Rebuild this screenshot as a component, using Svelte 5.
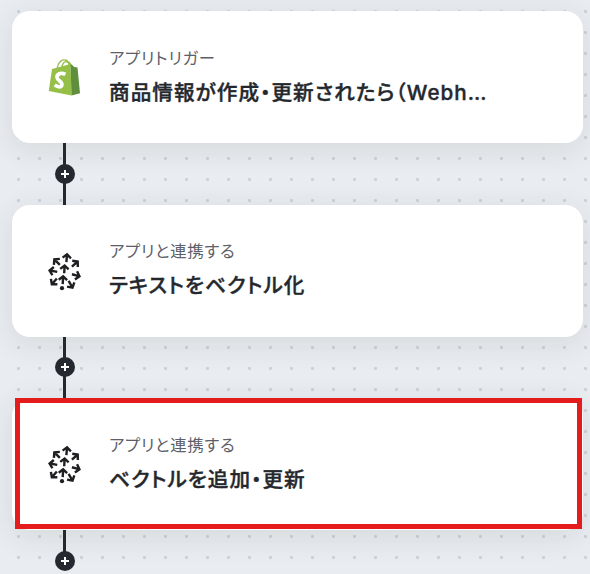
<script>
  let steps = [
    { icon: "shop", label: "アプリトリガー", title: "商品情報が作成・更新されたら（Webh…", selected: false },
    { icon: "vector", label: "アプリと連携する", title: "テキストをベクトル化", selected: false },
    { icon: "vector", label: "アプリと連携する", title: "ベクトルを追加・更新", selected: true },
  ];

  // x, y of the arrow tip and its rotation
  let arrows = [
    [19.2, 1.8, 5],
    [5.2, 7.2, -45],
    [0, 19.2, -80],
    [2.8, 34.6, -140],
    [25.3, 38, 150],
    [33, 25.7, 105],
    [30.9, 9.4, 48],
    [16.7, 12.9, 3],
    [15.2, 23.8, 3],
  ];
</script>

<main>
  {#each steps as step}
    <section class="card" class:selected={step.selected}>
      <div class="icon">
        {#if step.icon == "shop"}
          <svg width="34" height="38" viewBox="0 0 34 38">
            <path d="M9 11C10 4 14 1 17 2c3 0 4 4 4 7M14 10c0-5 3-7 5-6 4 0 4 3 4 5" fill="none" stroke="#95bf47" stroke-width="1.3" />
            <path d="M4 11 22.5 6l1 31.5L.8 33z" fill="#95bf47" />
            <path d="m22.5 6 1.7 1 2 2 3.3.6L32 35.2l-8.5 2.3z" fill="#5e8e3e" />
            <path d="M17.4 16.3c-4.8-2.3-8.6-.3-8.4 3 .3 3.6 5.4 4 4.9 7.4-.4 2.9-4 2.6-7.2.4" fill="none" stroke="#fff" stroke-width="3.7" />
          </svg>
        {:else}
          <svg width="34" height="40" viewBox="0 0 34 40" overflow="visible">
            {#each arrows as [x, y, angle]}
              <path class="arrow" d="M-4.2 5.2 0 1.6l4.2 3.6M0 2v7.4" transform="translate({x} {y}) rotate({angle})" />
            {/each}
            <circle cx="14" cy="37.2" r="2.1" fill="#1f1f22" />
          </svg>
        {/if}
      </div>
      <div class="text">
        <p class="label">{step.label}</p>
        <p class="title">{step.title}</p>
      </div>
    </section>
    <div class="connector">
      <span class="add">
        <svg width="20" height="20" viewBox="0 0 20 20">
          <path d="M10 6v8M6 10h8" stroke="#fff" stroke-width="2" />
        </svg>
      </span>
    </div>
  {/each}
</main>

<style>
  :global(body) {
    overflow: hidden;
  }
  main {
    box-sizing: border-box;
    height: 574px;
    padding: 11px 7px 0 12px;
    overflow: hidden;
    background-color: #e9ecf1;
    background-image: radial-gradient(circle, #cdd1d8 1.2px, transparent 2px);
    background-size: 21px 21px;
    background-position: 8px 1px;
    font-family: Inter, "Noto Sans CJK JP", sans-serif;
    font-feature-settings: "palt";
  }
  .card {
    position: relative;
    box-sizing: border-box;
    display: flex;
    align-items: center;
    height: 132px;
    padding-left: 36px;
    border-radius: 18px;
    background: #fff;
    box-shadow: 0 6px 30px rgba(50, 60, 50, 0.11);
  }
  .selected::after {
    content: "";
    position: absolute;
    inset: 0 1px 1px 2.5px;
    border: 5px solid #e51c1c;
  }
  .icon {
    display: flex;
    width: 61px;
  }
  .arrow {
    fill: none;
    stroke: #1f1f22;
    stroke-width: 2.4;
  }
  .text {
    padding-top: 3px;
  }
  p {
    margin: 0;
    white-space: nowrap;
  }
  .label {
    color: #5c6068;
    font-size: 16.4px;
    line-height: 28px;
    letter-spacing: 0.75px;
  }
  .title {
    color: #24282d;
    font-size: 20.6px;
    font-weight: 500;
    line-height: 42px;
    letter-spacing: 1.05px;
    -webkit-text-stroke: 0.4px #24282d;
  }
  .connector {
    position: relative;
    display: flex;
    align-items: center;
    justify-content: center;
    width: 20px;
    height: 61.5px;
    margin-left: 43px;
    background: linear-gradient(#24282f, #24282f) 8px 0 / 3px 100% no-repeat;
  }
  .connector:last-child {
    background-size: 3px 50%;
  }
  .add {
    display: flex;
    border-radius: 50%;
    background: #24282f;
  }
</style>
